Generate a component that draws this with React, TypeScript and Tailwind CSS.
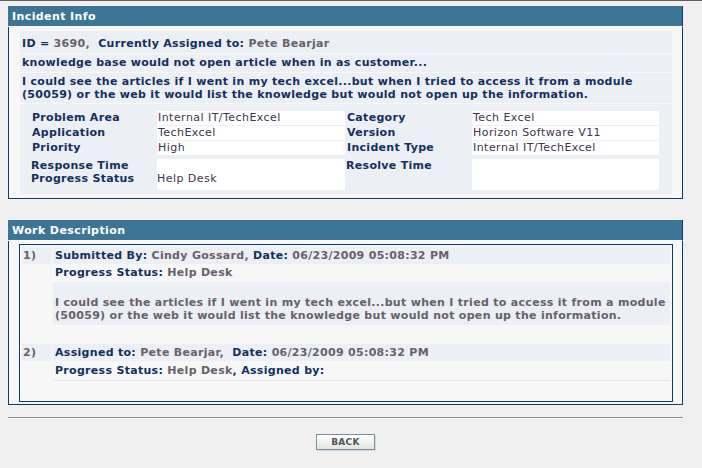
const navy = 'text-[#14305f]'
const grey = 'text-[#67616b]'

function PanelHeader({ title }: { title: string }) {
  return (
    <div className="h-[20px] bg-[#3d7596] border-r border-[#0b3c70] pl-[4px] flex items-center text-white font-bold tracking-[0.4px] border-b border-b-[#fafafa] box-content">
      {title}
    </div>
  )
}

function Label({ children }: { children: React.ReactNode }) {
  return <div className={`${navy} font-bold pl-[1px]`}>{children}</div>
}

function Value({ children }: { children?: React.ReactNode }) {
  return <div className="bg-white text-[#42334f] pl-[1px] tracking-[0.45px]">{children}</div>
}

export default function App() {
  return (
    <div className="min-h-[468px] bg-[#f0f0f0] border-t border-[#5f5f5f] font-['DejaVu_Sans','Liberation_Sans',sans-serif] text-[11px] leading-[13px] tracking-[0.3px]">
      {/* Incident Info */}
      <div className="ml-[8px] w-[675px] mt-[5px]">
        <PanelHeader title="Incident Info" />
        <div className="bg-[#f7f7f7] border-l border-r border-b border-[#0b3c70] pl-[11px] pr-[10px] pt-[4px] pb-[4px]">
          <div className="flex flex-col gap-[1px]">
            <div className={`bg-[#eceff3] h-[22px] pt-[6px] pl-[2px] font-bold ${navy}`}>
              ID = <span className={grey}>3690,</span>{'\u00a0\u00a0'}Currently Assigned to: <span className={grey}>Pete Bearjar</span>
            </div>
            <div className={`bg-[#eceff3] h-[18px] pt-[2px] pl-[2px] font-bold ${navy}`}>
              knowledge base would not open article when in as customer...
            </div>
            <div className={`bg-[#eceff3] h-[30px] pt-[2px] pl-[2px] font-bold ${navy}`}>
              I could see the articles if I went in my tech excel...but when I tried to access it from a module (50059) or the web it would list the knowledge but would not open up the information.
            </div>
          </div>
          <div className="bg-[#eceff3] mt-[1px] pt-[7px] pb-[4px] pl-[11px] pr-[12px] leading-[14px]">
            <div className="grid grid-cols-[125px_188px_125px_187px] gap-x-[1px] gap-y-[0px]">
              <Label>Problem Area</Label>
              <Value>Internal IT/TechExcel</Value>
              <Label>Category</Label>
              <Value>Tech Excel</Value>
              <div className="col-span-4 h-[1px]" />
              <Label>Application</Label>
              <Value>TechExcel</Value>
              <Label>Version</Label>
              <Value>Horizon Software V11</Value>
              <div className="col-span-4 h-[1px]" />
              <Label>Priority</Label>
              <Value>High</Value>
              <Label>Incident Type</Label>
              <Value>Internal IT/TechExcel</Value>
              <div className="col-span-4 h-[4px]" />
              <div className={`${navy} font-bold leading-[13px] h-[31px]`}>
                Response Time
                <br />
                Progress Status
              </div>
              <div className="bg-white text-[#42334f] leading-[13px] h-[31px] tracking-[0.45px]">
                <br />
                Help Desk
              </div>
              <div className={`${navy} font-bold leading-[13px] h-[31px]`}>Resolve Time</div>
              <div className="bg-white h-[31px]" />
            </div>
          </div>
        </div>
      </div>

      {/* Work Description */}
      <div className="ml-[8px] w-[675px] mt-[21px]">
        <PanelHeader title="Work Description" />
        <div className="bg-[#f7f7f7] border-l border-r border-b border-[#0b3c70] pl-[10px] pr-[9px] pt-[3px] pb-[2px]">
          <div className="border border-[#0b3c70] px-[2px] pt-[2px] pb-[20px]">
            <div className="grid grid-cols-[30px_1fr] gap-x-[1px] font-bold">
              <div className={`bg-[#eceff3] h-[17px] leading-[17px] pl-[1px] ${grey}`}>1)</div>
              <div className={`bg-[#eceff3] h-[17px] leading-[17px] pl-[2px] ${navy}`}>
                Submitted By: <span className={grey}>Cindy Gossard,</span> Date: <span className={grey}>06/23/2009 05:08:32 PM</span>
              </div>
              <div />
              <div className={`h-[18px] leading-[18px] pl-[2px] ${navy}`}>
                Progress Status: <span className={grey}>Help Desk</span>
              </div>
              <div />
              <div className={`bg-[#eceff3] h-[43px] pt-[14px] pl-[2px] ${grey}`}>
                I could see the articles if I went in my tech excel...but when I tried to access it from a module (50059) or the web it would list the knowledge but would not open up the information.
              </div>
              <div className="col-span-2 h-[19px]" />
              <div className={`bg-[#eceff3] h-[17px] leading-[17px] pl-[1px] ${grey}`}>2)</div>
              <div className={`bg-[#eceff3] h-[17px] leading-[17px] pl-[2px] ${navy}`}>
                Assigned to: <span className={grey}>Pete Bearjar,</span>{'\u00a0\u00a0'}Date: <span className={grey}>06/23/2009 05:08:32 PM</span>
              </div>
              <div />
              <div className={`h-[19px] leading-[18px] pl-[2px] border-b border-[#e6e6e6] mt-[1px] ${navy}`}>
                Progress Status: <span className={grey}>Help Desk</span>, Assigned by:
              </div>
            </div>
          </div>
        </div>
      </div>

      <div className="ml-[8px] w-[675px] mt-[12px] border-t border-[#8c8c8c] border-b border-b-[#fbfbfb]" />

      <div className="ml-[8px] w-[675px] flex justify-center pt-[15px]">
        <button className="w-[59px] h-[16px] border border-[#7f8ba2] bg-gradient-to-b from-[#ffffff] to-[#dfe6df] text-[9px] leading-[14px] font-bold text-[#555555] tracking-[0.3px] shadow-[1px_1px_0_#d6d6d6]">
          BACK
        </button>
      </div>
    </div>
  )
}
